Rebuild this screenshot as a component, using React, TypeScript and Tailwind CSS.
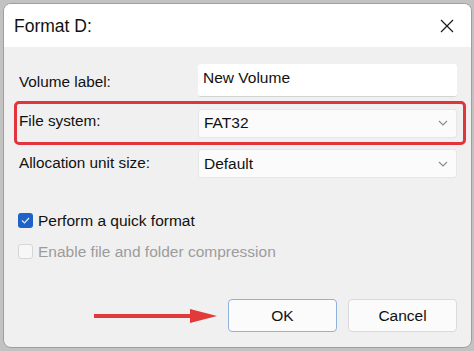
import React from 'react';

const font = { fontFamily: '"Liberation Sans", Arial, sans-serif' };

function Chevron() {
  return (
    <svg width="12" height="8" viewBox="0 0 12 8" className="shrink-0">
      <path d="M2 2 L6 6 L10 2" fill="none" stroke="#8a8a8a" strokeWidth="1.1" />
    </svg>
  );
}

function Select({ value }: { value: string }) {
  return (
    <div className="w-[259px] h-[29px] bg-[#fbfbfb] rounded-[3px] border border-[#e6e6e6] flex items-center justify-between pl-[5px] pr-[7px]">
      <span className="text-[15.5px] text-[#111]">{value}</span>
      <Chevron />
    </div>
  );
}

export default function App() {
  return (
    <div className="w-[474px] h-[351px] bg-[#c2c2c2] pl-[3px] pt-[3px] overflow-hidden" style={font}>
      <div className="w-[469px] h-[345px] rounded-[8px] overflow-hidden border border-[#9e9e9e] flex flex-col bg-[#f0f0f0]">
        {/* Title bar */}
        <div className="h-[43px] bg-white flex items-center justify-between pl-[10px] pr-[17px] shrink-0">
          <span className="text-[17.5px] text-[#111] mt-[1px]">Format D:</span>
          <svg width="14" height="14" viewBox="0 0 14 14">
            <path d="M1 1 L13 13 M13 1 L1 13" stroke="#1a1a1a" strokeWidth="1.2" />
          </svg>
        </div>

        {/* Body */}
        <div className="flex-1 pt-[17px] pl-[10px] pr-[5px]">
          <div className="flex items-center justify-between h-[33px] pl-[5px] pr-[9px]">
            <span className="text-[15.3px] text-[#111] mt-[3px]">Volume label:</span>
            <div className="w-[259px] h-[33px] bg-white border-b border-[#d4d4d4] rounded-[3px] pl-[5px] pt-[2px]">
              <span className="text-[15.5px] text-[#111]">New Volume</span>
            </div>
          </div>

          <div className="mt-[4px] h-[44px] border-[3px] border-[#e2343c] rounded-[5px] flex items-center justify-between pl-[2px] pr-[6px]">
            <span className="text-[15.3px] text-[#111] -mt-[3px]">File system:</span>
            <Select value="FAT32" />
          </div>

          <div className="mt-[4px] flex items-center justify-between h-[29px] pl-[5px] pr-[9px]">
            <span className="text-[15.3px] text-[#111]">Allocation unit size:</span>
            <Select value="Default" />
          </div>

          <div className="mt-[35px] pl-[4px] flex flex-col gap-[16px]">
            <div className="flex items-center gap-[5px] h-[15px]">
              <div className="w-[15px] h-[15px] rounded-[3px] bg-[#1d62c6] flex items-center justify-center">
                <svg width="9" height="7" viewBox="0 0 9 7">
                  <path d="M1 3.5 L3.5 6 L8 1" fill="none" stroke="#dfe9f7" strokeWidth="1.2" />
                </svg>
              </div>
              <span className="text-[15.5px] text-[#111]">Perform a quick format</span>
            </div>
            <div className="flex items-center gap-[5px] h-[15px]">
              <div className="w-[15px] h-[15px] rounded-[3px] bg-[#f7f7f7] border border-[#d6d6d6]" />
              <span className="text-[15.5px] text-[#9c9c9c]">Enable file and folder compression</span>
            </div>
          </div>

          <div className="mt-[40px] flex items-center justify-end pr-[9px]">
            <svg width="124" height="16" viewBox="0 0 124 16" className="mr-[10px]">
              <path d="M0 8 L102 8" stroke="#e23a3a" strokeWidth="4" />
              <path d="M96 1 L123 8 L96 15 Z" fill="#e23a3a" />
            </svg>
            <div className="w-[109px] h-[33px] rounded-[4px] bg-[#fbfbfb] border border-[#8fb2dc] flex items-center justify-center">
              <span className="text-[15.5px] text-[#111]">OK</span>
            </div>
            <div className="ml-[11px] w-[109px] h-[33px] rounded-[4px] bg-[#fbfbfb] border border-[#dadada] flex items-center justify-center">
              <span className="text-[15.5px] text-[#111]">Cancel</span>
            </div>
          </div>
        </div>
      </div>
    </div>
  );
}
